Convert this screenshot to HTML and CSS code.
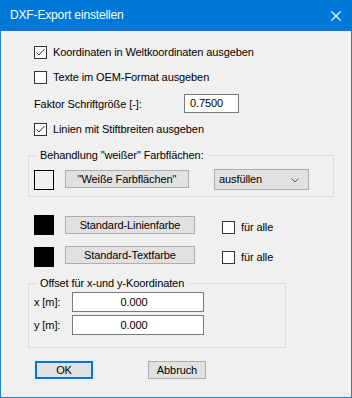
FILE: index.html
```html
<!DOCTYPE html>
<html lang="de">
<head>
    <meta charset="UTF-8">
    <title>DXF-Export einstellen</title>
    <link rel="stylesheet" href="styles.css">
</head>
<body>
    <div class="window">
        <div class="titlebar">
            <span class="title">DXF-Export einstellen</span>
            <svg class="close" width="10" height="10" viewBox="0 0 10 10">
                <path d="M0.5 0.5 L9.5 9.5 M9.5 0.5 L0.5 9.5" stroke="#fff" stroke-width="1.1" fill="none"/>
            </svg>
        </div>

        <div class="content">
            <div class="check-row r1">
                <span class="box"><svg width="11" height="11" viewBox="0 0 11 11"><polyline points="1.5,5.5 4,8 9.5,2" fill="none" stroke="#333" stroke-width="1"/></svg></span>
                <span>Koordinaten in Weltkoordinaten ausgeben</span>
            </div>
            <div class="check-row r2">
                <span class="box"></span>
                <span>Texte im OEM-Format ausgeben</span>
            </div>
            <div class="factor-row">
                <span class="factor-label">Faktor Schriftgröße [-]:</span>
                <span class="edit factor-edit">0.7500</span>
            </div>
            <div class="check-row r3">
                <span class="box"><svg width="11" height="11" viewBox="0 0 11 11"><polyline points="1.5,5.5 4,8 9.5,2" fill="none" stroke="#333" stroke-width="1"/></svg></span>
                <span>Linien mit Stiftbreiten ausgeben</span>
            </div>

            <div class="group group-white">
                <span class="legend">Behandlung "weißer" Farbflächen:</span>
                <div class="white-row">
                    <span class="swatch swatch-empty"></span>
                    <span class="btn btn-white">"Weiße Farbflächen"</span>
                    <span class="select">ausfüllen
                        <svg class="chev" width="8" height="5" viewBox="0 0 8 5"><polyline points="0.5,0.5 4,4 7.5,0.5" fill="none" stroke="#555" stroke-width="1"/></svg>
                    </span>
                </div>
            </div>

            <div class="color-row row-line">
                <span class="swatch swatch-black"></span>
                <span class="btn btn-color">Standard-Linienfarbe</span>
                <span class="box all-box"></span>
                <span>für alle</span>
            </div>
            <div class="color-row row-text">
                <span class="swatch swatch-black sw-low"></span>
                <span class="btn btn-color">Standard-Textfarbe</span>
                <span class="box all-box"></span>
                <span>für alle</span>
            </div>

            <div class="group group-offset">
                <span class="legend">Offset für x-und y-Koordinaten</span>
                <div class="offset-row">
                    <span class="offset-label">x [m]:</span>
                    <span class="edit offset-edit">0.000</span>
                </div>
                <div class="offset-row">
                    <span class="offset-label">y [m]:</span>
                    <span class="edit offset-edit">0.000</span>
                </div>
            </div>

            <div class="buttons">
                <span class="btn btn-ok">OK</span>
                <span class="btn btn-cancel">Abbruch</span>
            </div>
        </div>
    </div>
</body>
</html>
```

FILE: styles.css
```css
body{
    margin: 0;
    background-color: #f0f0f0;
    font-family: "Liberation Sans", Arial, sans-serif;
    font-size: 11px;
    letter-spacing: -0.1px;
    color: #000;
}

.window{
    width: 352px;
    height: 398px;
    box-sizing: border-box;
    border: 1px solid #1883d7;
    border-top: none;
    background-color: #f0f0f0;
}

.titlebar{
    height: 31px;
    margin: 0 -1px;
    background-color: #0078d7;
    color: #fff;
    display: flex;
    align-items: center;
    justify-content: space-between;
    padding: 0 11px 0 10px;
    box-sizing: border-box;
}

.title{
    font-size: 12px;
    letter-spacing: -0.15px;
    padding-bottom: 1px;
}

.close{
    display: block;
}

.content{
    padding-left: 33px;
}

.check-row{
    display: flex;
    align-items: center;
    height: 13px;
    line-height: 13px;
}

.r1{ margin-top: 15px; }
.r2{ margin-top: 12px; }
.r3{ margin-top: 10px; }

.box{
    width: 13px;
    height: 13px;
    box-sizing: border-box;
    border: 1px solid #333;
    background-color: #fff;
    margin-right: 6px;
    flex: none;
}

.box svg{
    display: block;
}

.factor-row{
    display: flex;
    align-items: center;
    height: 19px;
    margin-top: 10px;
}

.factor-label{
    width: 150px;
}

.edit{
    box-sizing: border-box;
    border: 1px solid #7a7a7a;
    background-color: #fff;
    height: 19px;
    line-height: 17px;
}

.factor-edit{
    width: 55px;
    padding-left: 5px;
}

.group{
    position: relative;
    margin-left: -6px;
    box-sizing: border-box;
    border: 1px solid #dcdcdc;
}

.legend{
    position: absolute;
    top: -7px;
    left: 7px;
    padding: 0 4px;
    line-height: 13px;
    background-color: #f0f0f0;
}

.group-white{
    width: 306px;
    height: 42px;
    margin-top: 19px;
    padding: 14px 0 0 5px;
}

.white-row{
    display: flex;
    align-items: flex-start;
}

.swatch{
    width: 20px;
    height: 20px;
    box-sizing: border-box;
    flex: none;
}

.swatch-empty{
    border: 1px solid #000;
}

.swatch-black{
    background-color: #000;
}

.btn{
    box-sizing: border-box;
    border: 1px solid #adadad;
    background-color: #e1e1e1;
    height: 18px;
    line-height: 16px;
    text-align: center;
}

.btn-white{
    width: 124px;
    margin-left: 11px;
}

.select{
    position: relative;
    width: 95px;
    height: 21px;
    margin-left: 25px;
    margin-top: -1px;
    box-sizing: border-box;
    border: 1px solid #adadad;
    background-color: #e1e1e1;
    line-height: 19px;
    padding-left: 4px;
}

.chev{
    position: absolute;
    right: 9px;
    top: 8px;
}

.color-row{
    display: flex;
    align-items: flex-start;
    height: 21px;
}

.row-line{ margin-top: 18px; }
.row-text{ margin-top: 10px; }

.sw-low{
    margin-top: 1px;
}

.row-line .btn-color{ margin-top: 1px; }

.btn-color{
    width: 130px;
    margin-left: 11px;
}

.all-box{
    margin-left: 27px;
    margin-right: 6px;
}

.row-line .all-box{ margin-top: 6px; }
.row-text .all-box{ margin-top: 5px; }

.color-row > span:last-child{
    line-height: 13px;
    margin-top: 6px;
}

.row-text > span:last-child{ margin-top: 5px; }

.group-offset{
    width: 258px;
    height: 65px;
    margin-top: 16px;
    padding: 8px 0 0 5px;
}

.offset-row{
    display: flex;
    align-items: center;
    height: 20px;
    margin-bottom: 3px;
}

.offset-label{
    width: 38px;
}

.offset-edit{
    width: 132px;
    height: 20px;
    line-height: 18px;
    text-align: center;
    padding-right: 8px;
}

.buttons{
    display: flex;
    margin-top: 13px;
    padding-left: 1px;
}

.btn-ok{
    width: 58px;
    border: 2px solid #0078d7;
    line-height: 14px;
}

.btn-cancel{
    width: 58px;
    margin-left: 55px;
}
```
